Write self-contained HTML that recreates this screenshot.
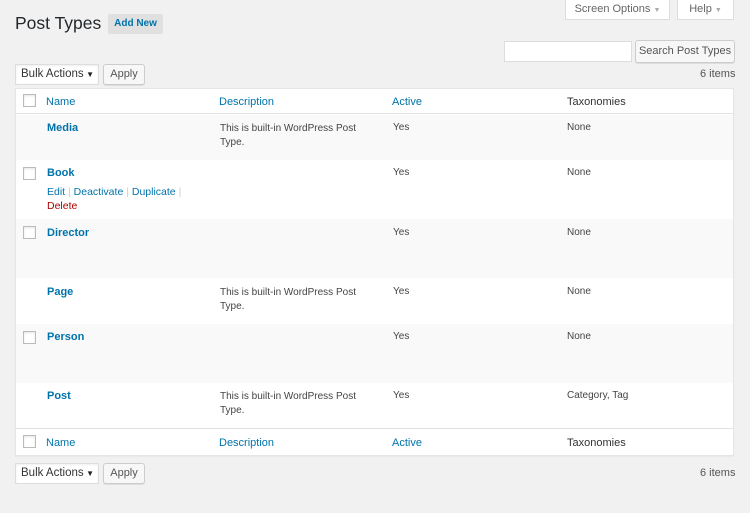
<!DOCTYPE html>
<html><head><meta charset="utf-8"><style>
*{margin:0;padding:0;box-sizing:border-box}
body{width:750px;height:513px;background:#f1f1f1;font-family:"Liberation Sans",sans-serif;color:#444;font-size:11px;position:relative;overflow:hidden}
.a{position:absolute;white-space:nowrap}
.btn{position:absolute;background:#f7f7f7;border:1px solid #ccc;border-radius:3px;color:#555;font-size:11px;text-align:center;box-shadow:0 1px 0 #ddd}
.sel{position:absolute;background:#fff;border:1px solid #ddd;font-size:11.5px;color:#333;padding-left:5px;box-shadow:inset 0 1px 2px rgba(0,0,0,.07)}
.link{color:#0073aa}
.name{color:#0073aa;font-weight:bold;font-size:11px}
.cb{position:absolute;width:13px;height:13px;border:1px solid #bbb;background:#fff;box-shadow:inset 0 1px 2px rgba(0,0,0,.1)}
.row{position:absolute;left:16px;width:717px}
</style></head><body>
<div class="a" style="left:15px;top:13px;font-size:17.5px;color:#23282d">Post Types</div>
<div class="a" style="left:108px;top:14px;width:55px;height:20px;background:#e0e0e0;border-radius:2px;color:#0073aa;font-weight:bold;font-size:10px;line-height:20px;text-align:center">Add New</div>
<div class="a" style="left:565px;top:0;width:105px;height:20px;background:#fff;border:1px solid #ddd;border-top:none;color:#666;font-size:11px;line-height:18px;text-align:center">Screen Options <span style="font-size:7px;color:#aaa">▼</span></div>
<div class="a" style="left:677px;top:0;width:57px;height:20px;background:#fff;border:1px solid #ddd;border-top:none;color:#666;font-size:11px;line-height:18px;text-align:center">Help <span style="font-size:7px;color:#aaa">▼</span></div>
<div class="a" style="left:504px;top:41px;width:128px;height:21px;background:#fff;border:1px solid #ddd"></div>
<div class="btn" style="left:635px;top:40px;width:100px;height:23px;line-height:21px">Search Post Types</div>
<div class="a" style="left:700px;top:68px;color:#555">6 items</div>
<div class="sel" style="left:15px;top:64px;width:84px;height:21px;line-height:19px">Bulk Actions <span style="font-size:8px;position:absolute;right:4px;color:#222">▼</span></div>
<div class="btn" style="left:103px;top:64px;width:42px;height:21px;line-height:19px">Apply</div>

<div class="a" style="left:15px;top:88px;width:719px;height:368px;background:#fff;border:1px solid #e5e5e5;box-shadow:0 1px 1px rgba(0,0,0,.04)"></div>
<div class="row" style="top:89px;height:25px;border-bottom:1px solid #e1e1e1"></div>
<div class="row" style="top:115px;height:45px;background:#f9f9f9"></div>
<div class="row" style="top:219px;height:59px;background:#f9f9f9"></div>
<div class="row" style="top:324px;height:59px;background:#f9f9f9"></div>
<div class="row" style="top:428px;height:1px;background:#e1e1e1"></div>

<div class="cb" style="left:23px;top:94px"></div>
<div class="a link" style="left:46px;top:96px;font-size:11px">Name</div>
<div class="a link" style="left:219px;top:96px;font-size:11px">Description</div>
<div class="a link" style="left:392px;top:96px;font-size:11px">Active</div>
<div class="a" style="left:567px;top:96px;font-size:11px;color:#333">Taxonomies</div>

<div class="a name" style="left:47px;top:122px">Media</div>
<div class="a" style="left:220px;top:122px;line-height:14px;font-size:10px">This is built-in WordPress Post<br>Type.</div>
<div class="a" style="left:393px;top:122px;font-size:10px">Yes</div>
<div class="a" style="left:567px;top:122px;font-size:10px">None</div>

<div class="cb" style="left:23px;top:167px"></div>
<div class="a name" style="left:47px;top:167px">Book</div>
<div class="a" style="left:47px;top:186px;font-size:10.5px"><span class="link">Edit</span> <span style="color:#ccc">|</span> <span class="link">Deactivate</span> <span style="color:#ccc">|</span> <span class="link">Duplicate</span> <span style="color:#ccc">|</span></div>
<div class="a" style="left:47px;top:200px;font-size:10.5px;color:#a00">Delete</div>
<div class="a" style="left:393px;top:167px;font-size:10px">Yes</div>
<div class="a" style="left:567px;top:167px;font-size:10px">None</div>

<div class="cb" style="left:23px;top:226px"></div>
<div class="a name" style="left:47px;top:227px">Director</div>
<div class="a" style="left:393px;top:227px;font-size:10px">Yes</div>
<div class="a" style="left:567px;top:227px;font-size:10px">None</div>

<div class="a name" style="left:47px;top:286px">Page</div>
<div class="a" style="left:220px;top:286px;line-height:14px;font-size:10px">This is built-in WordPress Post<br>Type.</div>
<div class="a" style="left:393px;top:286px;font-size:10px">Yes</div>
<div class="a" style="left:567px;top:286px;font-size:10px">None</div>

<div class="cb" style="left:23px;top:331px"></div>
<div class="a name" style="left:47px;top:331px">Person</div>
<div class="a" style="left:393px;top:331px;font-size:10px">Yes</div>
<div class="a" style="left:567px;top:331px;font-size:10px">None</div>

<div class="a name" style="left:47px;top:390px">Post</div>
<div class="a" style="left:220px;top:390px;line-height:14px;font-size:10px">This is built-in WordPress Post<br>Type.</div>
<div class="a" style="left:393px;top:390px;font-size:10px">Yes</div>
<div class="a" style="left:567px;top:390px;font-size:10px">Category, Tag</div>

<div class="cb" style="left:23px;top:435px"></div>
<div class="a link" style="left:46px;top:437px;font-size:11px">Name</div>
<div class="a link" style="left:219px;top:437px;font-size:11px">Description</div>
<div class="a link" style="left:392px;top:437px;font-size:11px">Active</div>
<div class="a" style="left:567px;top:437px;font-size:11px;color:#333">Taxonomies</div>

<div class="sel" style="left:15px;top:463px;width:84px;height:21px;line-height:19px">Bulk Actions <span style="font-size:8px;position:absolute;right:4px;color:#222">▼</span></div>
<div class="btn" style="left:103px;top:463px;width:42px;height:21px;line-height:19px">Apply</div>
<div class="a" style="left:700px;top:467px;color:#555">6 items</div>
</body></html>
